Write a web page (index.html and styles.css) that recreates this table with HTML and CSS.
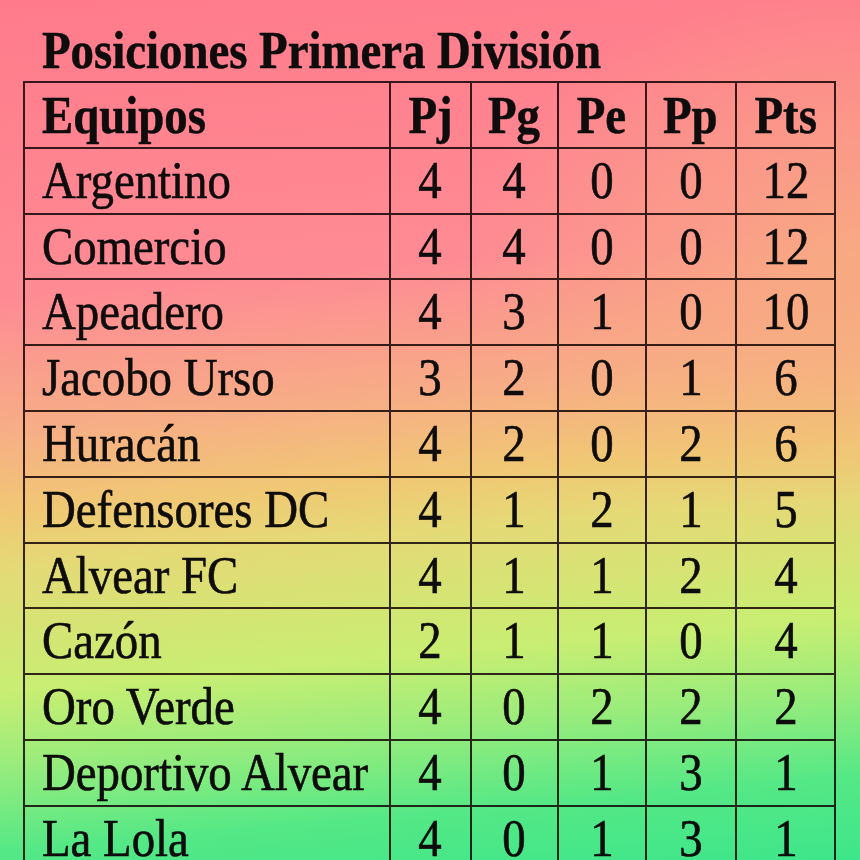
FILE: index.html
```html
<!DOCTYPE html>
<html lang="es">
<head>
<meta charset="utf-8">
<title>Posiciones Primera División</title>
<link rel="stylesheet" href="styles.css">
</head>
<body>
<div class="page">
  <h1 class="title"><span class="sx">Posiciones Primera División</span></h1>
  <div class="grid">
    <div class="cell head team"><span class="sx">Equipos</span></div>
    <div class="cell head num"><span class="sx">Pj</span></div>
    <div class="cell head num"><span class="sx">Pg</span></div>
    <div class="cell head num"><span class="sx">Pe</span></div>
    <div class="cell head num"><span class="sx">Pp</span></div>
    <div class="cell head num"><span class="sx">Pts</span></div>

    <div class="cell team"><span class="sx">Argentino</span></div>
    <div class="cell num"><span class="sx">4</span></div><div class="cell num"><span class="sx">4</span></div><div class="cell num"><span class="sx">0</span></div><div class="cell num"><span class="sx">0</span></div><div class="cell num"><span class="sx">12</span></div>

    <div class="cell team"><span class="sx">Comercio</span></div>
    <div class="cell num"><span class="sx">4</span></div><div class="cell num"><span class="sx">4</span></div><div class="cell num"><span class="sx">0</span></div><div class="cell num"><span class="sx">0</span></div><div class="cell num"><span class="sx">12</span></div>

    <div class="cell team"><span class="sx">Apeadero</span></div>
    <div class="cell num"><span class="sx">4</span></div><div class="cell num"><span class="sx">3</span></div><div class="cell num"><span class="sx">1</span></div><div class="cell num"><span class="sx">0</span></div><div class="cell num"><span class="sx">10</span></div>

    <div class="cell team"><span class="sx">Jacobo Urso</span></div>
    <div class="cell num"><span class="sx">3</span></div><div class="cell num"><span class="sx">2</span></div><div class="cell num"><span class="sx">0</span></div><div class="cell num"><span class="sx">1</span></div><div class="cell num"><span class="sx">6</span></div>

    <div class="cell team"><span class="sx">Huracán</span></div>
    <div class="cell num"><span class="sx">4</span></div><div class="cell num"><span class="sx">2</span></div><div class="cell num"><span class="sx">0</span></div><div class="cell num"><span class="sx">2</span></div><div class="cell num"><span class="sx">6</span></div>

    <div class="cell team"><span class="sx">Defensores DC</span></div>
    <div class="cell num"><span class="sx">4</span></div><div class="cell num"><span class="sx">1</span></div><div class="cell num"><span class="sx">2</span></div><div class="cell num"><span class="sx">1</span></div><div class="cell num"><span class="sx">5</span></div>

    <div class="cell team"><span class="sx">Alvear FC</span></div>
    <div class="cell num"><span class="sx">4</span></div><div class="cell num"><span class="sx">1</span></div><div class="cell num"><span class="sx">1</span></div><div class="cell num"><span class="sx">2</span></div><div class="cell num"><span class="sx">4</span></div>

    <div class="cell team"><span class="sx">Cazón</span></div>
    <div class="cell num"><span class="sx">2</span></div><div class="cell num"><span class="sx">1</span></div><div class="cell num"><span class="sx">1</span></div><div class="cell num"><span class="sx">0</span></div><div class="cell num"><span class="sx">4</span></div>

    <div class="cell team"><span class="sx">Oro Verde</span></div>
    <div class="cell num"><span class="sx">4</span></div><div class="cell num"><span class="sx">0</span></div><div class="cell num"><span class="sx">2</span></div><div class="cell num"><span class="sx">2</span></div><div class="cell num"><span class="sx">2</span></div>

    <div class="cell team"><span class="sx">Deportivo Alvear</span></div>
    <div class="cell num"><span class="sx">4</span></div><div class="cell num"><span class="sx">0</span></div><div class="cell num"><span class="sx">1</span></div><div class="cell num"><span class="sx">3</span></div><div class="cell num"><span class="sx">1</span></div>

    <div class="cell team"><span class="sx">La Lola</span></div>
    <div class="cell num"><span class="sx">4</span></div><div class="cell num"><span class="sx">0</span></div><div class="cell num"><span class="sx">1</span></div><div class="cell num"><span class="sx">3</span></div><div class="cell num"><span class="sx">1</span></div>
  </div>
</div>
</body>
</html>
```
FILE: styles.css
```css
html, body {
  margin: 0;
  padding: 0;
}
body {
  width: 860px;
  height: 860px;
  overflow: hidden;
  background:
    radial-gradient(ellipse 45% 32% at 100% 30%, rgba(246, 178, 124, 0.75), rgba(246, 178, 124, 0) 100%),
    linear-gradient(175deg,
      #ff7b8b 0%,
      #fe8b94 32%,
      #f7ad86 46%,
      #f0c874 55%,
      #e4da76 61%,
      #c8ee72 74%,
      #98ec7c 82%,
      #55e886 91%,
      #3de68a 100%);
  font-family: "Liberation Serif", "Times New Roman", serif;
  color: #0e0c0c;
}
.page {
  width: 860px;
  height: 860px;
}
.title {
  margin: 0 0 1px 0;
  padding: 22px 0 0 42px;
  height: 58px;
  font-size: 52px;
  line-height: 58px;
  font-weight: bold;
  white-space: nowrap;
  -webkit-text-stroke: 0.5px #0e0c0c;
}
.sx {
  display: inline-block;
  transform: scaleX(0.9);
  transform-origin: 0 50%;
  white-space: nowrap;
}
.grid {
  margin-left: 23px;
  width: 811px;
  display: grid;
  grid-template-columns: 366px 80.5px 87.5px 87.5px 90.5px 99px;
  grid-auto-rows: 65.8px;
  border-left: 2px solid rgba(20, 5, 5, 0.85);
  border-top: 2px solid rgba(20, 5, 5, 0.85);
}
.cell {
  box-sizing: border-box;
  border-right: 2px solid rgba(20, 5, 5, 0.85);
  border-bottom: 2px solid rgba(20, 5, 5, 0.85);
  font-size: 52px;
  line-height: 63.8px;
  overflow: hidden;
  white-space: nowrap;
  -webkit-text-stroke: 0.6px #0e0c0c;
}
.team {
  padding-left: 17px;
}
.num {
  text-align: center;
}
.num .sx {
  transform-origin: 50% 50%;
}
.head {
  font-weight: bold;
  padding-top: 2px;
  line-height: 61.8px;
  -webkit-text-stroke: 0.5px #0e0c0c;
}
```
